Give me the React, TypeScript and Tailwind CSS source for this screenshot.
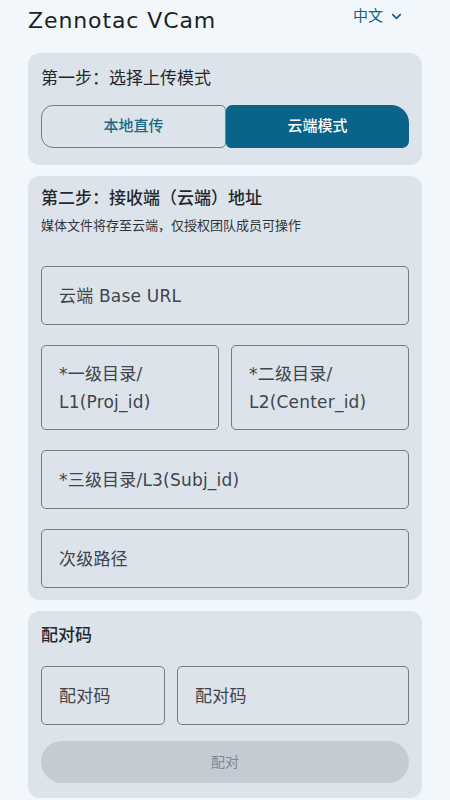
import { ChevronDown } from "lucide-react";

const cjk = { fontFamily: '"DejaVu Sans", "Noto Sans CJK SC", sans-serif' };

const Field = ({ label, className = "" }: { label: React.ReactNode; className?: string }) => (
  <div
    className={`flex items-center rounded-[5px] border border-[#757b84] px-[17px] text-[17px] leading-[28px] tracking-[0.2px] text-[#40454d] ${className}`}
  >
    <span>{label}</span>
  </div>
);

export default function App() {
  return (
    <div className="min-h-[800px] w-[450px] bg-[#f1f7fb] px-[28px]" style={cjk}>
      <div className="flex h-[53px] items-start justify-between">
        <h1 className="pt-[6px] text-[22px] leading-[30px] tracking-[0.9px] text-[#1c1f24]">Zennotac VCam</h1>
        <button className="mr-[18px] mt-[4px] flex items-center gap-[6px] text-[15px] leading-[24px] text-[#0d6486]">
          中文
          <ChevronDown className="h-[15px] w-[15px]" strokeWidth={2.75} />
        </button>
      </div>

      <section className="rounded-[12px] bg-[#dde3ea] px-[13px] pb-[17px] pt-[13px]">
        <h2 className="text-[17px] leading-[24px] text-[#24282e]">第一步：选择上传模式</h2>
        <div className="mt-[15px] flex h-[43px]">
          <button className="flex-1 rounded-l-[12px] rounded-r-[5px] border border-[#757b84] text-[15px] font-medium text-[#1a6a86]">
            本地直传
          </button>
          <button className="flex-1 rounded-bl-[5px] rounded-br-[7px] rounded-tl-[6px] rounded-tr-[18px] bg-[#0a6389] text-[15px] font-medium text-white">
            云端模式
          </button>
        </div>
      </section>

      <section className="mt-[11px] rounded-[12px] bg-[#dde3ea] px-[13px] pb-[12px] pt-[10px]">
        <h2 className="text-[17px] font-medium leading-[24px] text-[#24282e]">第二步：接收端（云端）地址</h2>
        <p className="mt-[8px] text-[13px] leading-[16px] text-[#30353b]">媒体文件将存至云端，仅授权团队成员可操作</p>
        <div className="mt-[32px] flex flex-col gap-[20px]">
          <Field label="云端 Base URL" className="h-[59px]" />
          <div className="flex gap-[12px]">
            <Field
              className="h-[85px] flex-1"
              label={
                <>
                  *一级目录/
                  <br />
                  L1(Proj_id)
                </>
              }
            />
            <Field
              className="h-[85px] flex-1"
              label={
                <>
                  *二级目录/
                  <br />
                  L2(Center_id)
                </>
              }
            />
          </div>
          <Field label="*三级目录/L3(Subj_id)" className="h-[59px]" />
          <Field label="次级路径" className="h-[59px]" />
        </div>
      </section>

      <section className="mt-[11px] rounded-[12px] bg-[#dde3ea] px-[13px] pb-[15px] pt-[12px]">
        <h2 className="text-[17px] font-medium leading-[24px] text-[#24282e]">配对码</h2>
        <div className="mt-[19px] flex gap-[12px]">
          <Field label="配对码" className="h-[59px] w-[124px]" />
          <Field label="配对码" className="h-[59px] flex-1" />
        </div>
        <button className="mt-[16px] h-[42px] w-full rounded-full bg-[#c4cbd3] text-[14px] text-[#80868e]">
          配对
        </button>
      </section>
    </div>
  );
}
